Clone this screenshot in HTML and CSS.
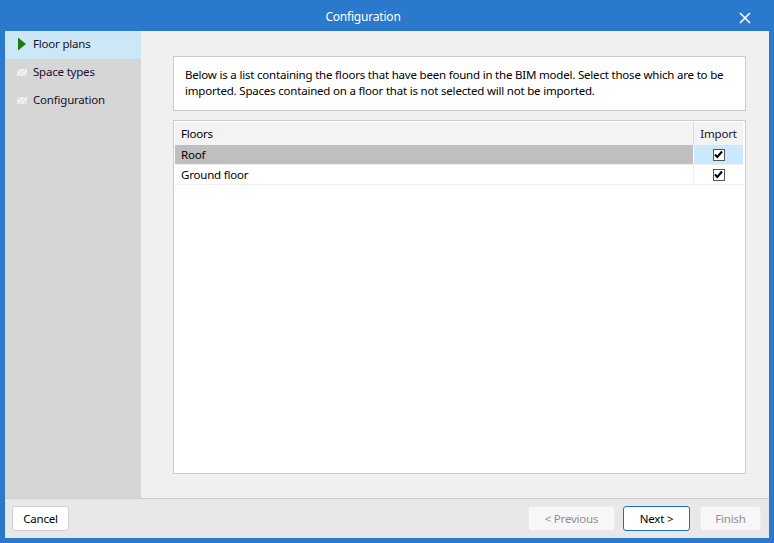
FILE: index.html
```html
<!DOCTYPE html>
<html>
<head>
<meta charset="utf-8">
<link rel="stylesheet" href="styles.css">
</head>
<body>
<div class="window">
  <div class="titlebar">
    <span class="title">Configuration</span>
    <span class="close"><svg width="12" height="12" viewBox="0 0 12 12"><path d="M1 1L11 11M11 1L1 11" stroke="#fff" stroke-width="1.6"/></svg></span>
  </div>
  <div class="main">
    <div class="sidebar">
      <div class="step active">
        <svg class="ico" width="10" height="14" viewBox="0 0 10 14"><path d="M1 0.5L9 7L1 13.5Z" fill="#1a7a14"/></svg>
        <span>Floor plans</span>
      </div>
      <div class="step">
        <svg class="ico" width="10" height="14" viewBox="0 0 10 14"><rect x="0" y="4" width="10" height="7" fill="#e4e4e4"/><path d="M0 9L5 4H7L0 11Z M3 11L10 4V6L5 11Z" fill="#f8f8f8"/></svg>
        <span>Space types</span>
      </div>
      <div class="step">
        <svg class="ico" width="10" height="14" viewBox="0 0 10 14"><rect x="0" y="4" width="10" height="7" fill="#e4e4e4"/><path d="M0 9L5 4H7L0 11Z M3 11L10 4V6L5 11Z" fill="#f8f8f8"/></svg>
        <span>Configuration</span>
      </div>
    </div>
    <div class="content">
      <div class="desc">Below is a list containing the floors that have been found in the BIM model. Select those which are to be imported. Spaces contained on a floor that is not selected will not be imported.</div>
      <div class="table">
        <div class="row head">
          <div class="c1">Floors</div>
          <div class="c2">Import</div>
        </div>
        <div class="row sel">
          <div class="c1">Roof</div>
          <div class="c2"><span class="chk"><svg width="9" height="9" viewBox="0 0 9 9"><path d="M1 4.5L3.3 7L8 1.5" stroke="#000" stroke-width="2" fill="none"/></svg></span></div>
        </div>
        <div class="row">
          <div class="c1">Ground floor</div>
          <div class="c2"><span class="chk"><svg width="9" height="9" viewBox="0 0 9 9"><path d="M1 4.5L3.3 7L8 1.5" stroke="#000" stroke-width="2" fill="none"/></svg></span></div>
        </div>
      </div>
    </div>
  </div>
  <div class="footer">
    <button class="btn">Cancel</button>
    <div class="spacer"></div>
    <button class="btn dis prev">&lt; Previous</button>
    <button class="btn primary next">Next &gt;</button>
    <button class="btn dis finish">Finish</button>
  </div>
</div>
</body>
</html>
```
FILE: styles.css
```css
* { box-sizing: border-box; }
html, body { margin: 0; padding: 0; }
body {
  width: 774px; height: 543px; overflow: hidden;
  font-family: "Noto Sans", "Open Sans", sans-serif;
  font-size: 11.5px; letter-spacing: -0.2px; color: #000;
}
.window {
  width: 774px; height: 543px;
  background: #2b79cc;
  padding: 0 5px 5px 5px;
  display: flex; flex-direction: column;
}
.titlebar {
  height: 31px; flex: none;
  display: flex; align-items: center; justify-content: center;
  position: relative; color: #fff; padding-right: 48px;
}
.title { font-size: 12px; margin-top: 2px; }
.close { position: absolute; right: 18px; top: 12px; line-height: 0; }
.main { flex: 1; display: flex; min-height: 0; background: #f0f0f0; }
.sidebar { width: 136px; background: #d6d6d6; flex: none; }
.step { height: 28px; display: flex; align-items: center; padding-left: 12px; color: #1a0f2a; padding-bottom: 3px; }
.step .ico { margin-right: 6px; }
.step.active { background: #cce8f7; }
.content { flex: 1; padding: 25px 23px 24px 32px; display: flex; flex-direction: column; gap: 9px; }
.desc {
  background: #fff; border: 1px solid #cbcbcb;
  height: 55px; padding: 10px 10px 0 11px; line-height: 16px; flex: none;
}
.table { flex: 1; background: #fff; border: 1px solid #cbcbcb; padding: 1px 2px 0 1px; }
.row { display: flex; height: 20px; border-bottom: 1px solid #f0f0f0; }
.row .c1 { flex: 1; padding-left: 6px; display: flex; align-items: center; padding-bottom: 1px; }
.row .c2 { width: 50px; display: flex; align-items: center; justify-content: center; border-left: 1px solid #f0f0f0; }
.row.head { height: 23px; background: #f3f3f3; border-bottom: none; }
.row.head .c2 { border-left: 1px solid #dcdcdc; color: #1a0f2a; padding-bottom: 1px; }
.row.sel .c1 { background: #bfbfbf; }
.row.sel .c2 { background: #cce8ff; border-left-color: #fff; }
.chk {
  width: 12px; height: 12px; border: 1px solid #555; background: #fff;
  display: inline-flex; align-items: center; justify-content: center; line-height: 0;
}
.footer {
  height: 40px; flex: none; background: #e8e8e8; border-top: 1px solid #cdcdcd;
  display: flex; align-items: center; padding: 0 8px 0 7px;
}
.spacer { flex: 1; }
.btn {
  font-family: inherit; font-size: 11.5px; letter-spacing: -0.2px; height: 25px;
  background: #fff; border: 1px solid #d0d0d0; border-radius: 3px; color: #000;
  padding: 0; margin-top: 0;
}
.btn:first-child { width: 57px; }
.btn.dis { background: #f7f7f7; color: #8f8f8f; border-color: #ececec; }
.btn.prev { width: 87px; }
.btn.next { width: 67px; margin-left: 8px; border-color: #1f6fc0; }
.btn.finish { width: 61px; margin-left: 10px; }
```
